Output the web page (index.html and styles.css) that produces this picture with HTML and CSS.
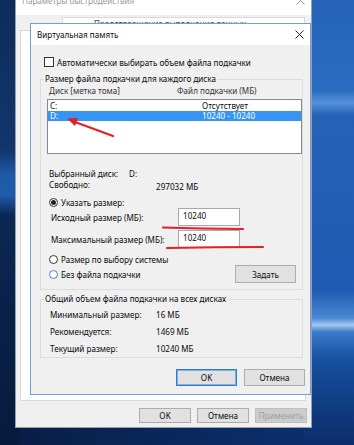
FILE: index.html
```html
<!DOCTYPE html>
<html lang="ru">

<head>
    <meta charset="UTF-8">
    <meta name="viewport" content="width=device-width, initial-scale=1.0">
    <title>Виртуальная память</title>
    <link rel="stylesheet" href="styles.css">
</head>

<body>
    <div class="desktop">

        <!-- окно за диалогом -->
        <div class="window perf">
            <div class="perf-title">
                <span>Параметры быстродействия</span>
                <svg class="close-icon inactive" width="9" height="9" viewBox="0 0 9 9">
                    <path d="M0.5 0.5 L8.5 8.5 M8.5 0.5 L0.5 8.5" />
                </svg>
            </div>
            <div class="perf-body">
                <div class="tabs">
                    <span class="tab">Предотвращение выполнения данных</span>
                </div>
                <div class="tab-page"></div>
                <div class="perf-buttons">
                    <button class="btn">OK</button>
                    <button class="btn">Отмена</button>
                    <button class="btn disabled">Применить</button>
                </div>
            </div>
        </div>

        <!-- диалог виртуальной памяти -->
        <div class="window vm">
            <div class="vm-title">
                <span>Виртуальная память</span>
                <svg class="close-icon" width="9" height="9" viewBox="0 0 9 9">
                    <path d="M0.5 0.5 L8.5 8.5 M8.5 0.5 L0.5 8.5" />
                </svg>
            </div>

            <div class="vm-body">
                <label class="check-row"><span class="checkbox"></span>Автоматически выбирать объем файла подкачки</label>

                <fieldset class="group">
                    <legend>Размер файла подкачки для каждого диска</legend>
                    <div class="list-head"><span>Диск [метка тома]</span><span>Файл подкачки (МБ)</span></div>
                    <div class="listbox">
                        <div class="item"><span>C:</span><span>Отсутствует</span></div>
                        <div class="item selected"><span>D:</span><span>10240 - 10240</span></div>
                    </div>

                    <div class="info">
                        <div class="info-row"><span class="info-label">Выбранный диск:</span><span>D:</span></div>
                        <div class="info-row"><span class="info-label wide">Свободно:</span><span class="free">297032 МБ</span></div>
                    </div>

                    <label class="radio-row"><span class="radio checked"></span>Указать размер:</label>
                    <div class="size-row"><span class="size-label">Исходный размер (МБ):</span><span class="input">10240</span></div>
                    <div class="size-row"><span class="size-label">Максимальный размер (МБ):</span><span class="input">10240</span></div>

                    <div class="choice">
                        <div class="choice-radios">
                            <label class="radio-row"><span class="radio"></span>Размер по выбору системы</label>
                            <label class="radio-row"><span class="radio focus"></span>Без файла подкачки</label>
                        </div>
                        <button class="btn set">Задать</button>
                    </div>
                </fieldset>

                <fieldset class="group total">
                    <legend>Общий объем файла подкачки на всех дисках</legend>
                    <div class="total-row"><span>Минимальный размер:</span><span>16 МБ</span></div>
                    <div class="total-row"><span>Рекомендуется:</span><span>1469 МБ</span></div>
                    <div class="total-row"><span>Текущий размер:</span><span>10240 МБ</span></div>
                </fieldset>

                <div class="vm-buttons">
                    <button class="btn default">OK</button>
                    <button class="btn">Отмена</button>
                </div>
            </div>
        </div>

        <!-- красные пометки поверх скриншота -->
        <svg class="marks" width="354" height="445" viewBox="0 0 354 445">
            <path class="mark" d="M113 136 L75 122" />
            <path class="mark-head" d="M67 118.5 L78 118 L75 126 Z" />
            <path class="mark" d="M163 227.5 Q200 228.5 243 229" />
            <path class="mark" d="M167 248 Q215 247 263 247" />
        </svg>
    </div>
</body>

</html>
```

FILE: styles.css
```css
body {
    margin: 0;
    font-family: "Noto Sans", "Open Sans", sans-serif;
    font-size: 8.1px;
    color: #0a0a0a;
}

.desktop {
    position: relative;
    width: 354px;
    height: 445px;
    overflow: hidden;
    background:
        linear-gradient(180deg, #0d2c5a 0, #12356b 150px, #1e5aa8 175px, #1f5cab 195px, #0b2753 215px, #061a3c 445px) left top / 20px 445px no-repeat,
        linear-gradient(180deg, #2463b8 0, #2a6cc0 90px, #5590d8 103px, #2462b6 115px, #1d5cb2 290px, #4a88d4 318px, #a5c9ef 325px, #3a7ac8 332px, #164f9e 360px, #0b2d6a 445px) right top / 50px 445px no-repeat,
        linear-gradient(90deg, #081d45, #0c3273);
}

.window {
    position: absolute;
    box-sizing: border-box;
    display: flex;
    flex-direction: column;
}

button {
    font-family: inherit;
    font-size: 8.1px;
    color: #0a0a0a;
    padding: 0;
}

.btn {
    box-sizing: border-box;
    background-color: #e1e1e1;
    border: 1px solid #adadad;
}

.close-icon path {
    stroke: #222;
    stroke-width: 1;
    fill: none;
}

.close-icon.inactive path {
    stroke: #999;
}

/* окно "Параметры быстродействия" */
.perf {
    left: 15px;
    top: -16px;
    width: 297px;
    height: 444px;
    border: 1px solid #9aa0a8;
    background-color: #f0f0f0;
}

.perf-title {
    height: 30px;
    background-color: #fff;
    color: #999;
    display: flex;
    align-items: center;
    justify-content: space-between;
    padding: 0 6px 0 6px;
}

.perf-body {
    flex: 1;
    display: flex;
    flex-direction: column;
    padding: 0 5px 0 4px;
}

.tabs {
    display: flex;
    padding-left: 42px;
    margin-top: 2px;
}

.tab {
    box-sizing: border-box;
    width: 243px;
    height: 13px;
    padding-left: 31px;
    line-height: 12px;
    background-color: #fff;
    border: 1px solid #d9d9d9;
    border-bottom: none;
    color: #444;
}

.tab-page {
    height: 371px;
    box-sizing: border-box;
    background-color: #fff;
    border: 1px solid #d9d9d9;
}

.perf-buttons {
    display: flex;
    justify-content: flex-end;
    gap: 6px;
    margin-top: 7px;
    margin-right: -1px;
}

.perf-buttons .btn {
    width: 52px;
    height: 15px;
}

.perf-buttons .btn.disabled {
    background-color: #cccccc;
    border-color: #bfbfbf;
    color: #a0a0a0;
}

/* диалог "Виртуальная память" */
.vm {
    left: 30px;
    top: 23px;
    width: 281px;
    height: 372px;
    border: 1px solid #6f9fd8;
    background-color: #f0f0f0;
}

.vm-title {
    height: 21px;
    flex: none;
    background-color: #fff;
    display: flex;
    align-items: center;
    justify-content: space-between;
    padding: 0 6px 0 6px;
}

.vm-body {
    padding: 11px 7px 0 9px;
}

.check-row {
    display: flex;
    align-items: center;
    height: 12px;
    margin-left: 4px;
}

.checkbox {
    box-sizing: border-box;
    width: 10px;
    height: 10px;
    border: 1px solid #333;
    background-color: #fff;
    margin-right: 3px;
}

.group {
    margin: 6px 0 0 0;
    padding: 0;
    border: 1px solid #dcdcdc;
    min-width: 0;
}

.group legend {
    margin-left: 3px;
    padding: 0 1px;
    line-height: 10px;
    height: 10px;
}

.list-head {
    display: grid;
    grid-template-columns: 128px auto;
    height: 12px;
    line-height: 12px;
    margin-top: 1px;
    padding-left: 8px;
    color: #333;
}

.listbox {
    box-sizing: border-box;
    width: 255px;
    height: 55px;
    margin: 2px 0 0 6px;
    background-color: #fff;
    border: 1px solid #828790;
}

.item {
    display: grid;
    grid-template-columns: 152px auto;
    height: 11px;
    line-height: 11px;
    padding-left: 2px;
}

.item.selected {
    height: 10px;
    line-height: 10px;
    background-color: #3794f2;
    color: #fff;
}

.info {
    margin-top: 14px;
    padding-left: 8px;
}

.info-row {
    display: flex;
    height: 11px;
    line-height: 11px;
}

.info-label {
    width: 80px;
}

.info-label.wide {
    width: 107px;
}

.free {
    padding-top: 2px;
}

.radio-row {
    display: flex;
    align-items: center;
    height: 11px;
    padding-left: 8px;
}

.group > .radio-row {
    margin-top: 7px;
}

.radio {
    box-sizing: border-box;
    width: 9px;
    height: 9px;
    border: 1px solid #333;
    border-radius: 50%;
    background-color: #fff;
    margin-right: 3px;
    display: flex;
    align-items: center;
    justify-content: center;
}

.radio.checked::after {
    content: "";
    width: 5px;
    height: 5px;
    border-radius: 50%;
    background-color: #222;
}

.radio.focus {
    border-color: #4a80c4;
}

.size-row {
    display: flex;
    align-items: center;
    height: 18px;
    padding-left: 10px;
}

.size-row + .size-row {
    margin-top: 4px;
}

.size-label {
    width: 127px;
}

.input {
    box-sizing: border-box;
    width: 62px;
    height: 18px;
    padding: 1px 0 0 4px;
    line-height: 12px;
    background-color: #fff;
    border: 1px solid #a9a9a9;
}

.choice {
    display: flex;
    justify-content: space-between;
    align-items: flex-end;
    margin-top: 6px;
    padding: 0 6px 6px 0;
}

.choice-radios {
    display: flex;
    flex-direction: column;
    gap: 4px;
    padding-bottom: 3px;
}

.btn.set {
    width: 61px;
    height: 18px;
}

.group.total {
    margin-top: 4px;
}

.total-row {
    display: grid;
    grid-template-columns: 106px auto;
    height: 17px;
    line-height: 17px;
    padding-left: 9px;
}

.total-row:first-of-type {
    margin-top: 2px;
}

.vm-buttons {
    display: flex;
    justify-content: flex-end;
    gap: 7px;
    margin: 11px -2px 0 0;
}

.vm-buttons .btn {
    width: 61px;
    height: 17px;
}

.btn.default {
    border-color: #2f7bd4;
    box-shadow: inset 0 0 0 1px #7fb0e8;
}

/* красные стрелка и подчёркивания */
.marks {
    position: absolute;
    left: 0;
    top: 0;
    pointer-events: none;
}

.mark {
    fill: none;
    stroke: #e0202a;
    stroke-width: 2.2;
    stroke-linecap: round;
}

.mark-head {
    fill: #e0202a;
}
```
